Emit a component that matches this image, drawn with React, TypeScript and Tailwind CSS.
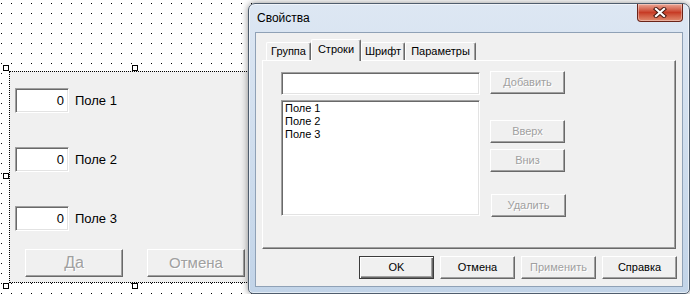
import React from 'react';

// classic 3D bevels
const raised =
  'border border-t-white border-l-white border-r-[#696969] border-b-[#696969] shadow-[inset_-1px_-1px_0_#a0a0a0] bg-[#f0f0f0]';
const sunken =
  'border border-t-[#a0a0a0] border-l-[#a0a0a0] border-r-white border-b-white shadow-[inset_1px_1px_0_#696969,inset_-1px_-1px_0_#e3e3e3] bg-white';
const disabledText = 'text-[#a0a0a0] [text-shadow:1px_1px_0_#fff]';

const Handle: React.FC<{ pos: string }> = ({ pos }) => (
  <div className={`absolute w-[6px] h-[6px] border border-black bg-white ${pos}`} />
);

const FieldRow: React.FC<{ label: string }> = ({ label }) => (
  <div className="flex items-center gap-[6px] h-[25px]">
    <div className={`${sunken} w-[54px] h-[25px] flex items-center justify-end pr-[4px] text-[13px] text-black`}>0</div>
    <span className="text-[13px] text-black">{label}</span>
  </div>
);

const DialogButton: React.FC<{ label: string; disabled?: boolean; isDefault?: boolean }> = ({
  label,
  disabled,
  isDefault,
}) => (
  <button
    className={`w-[75px] h-[23px] flex items-center justify-center text-[11px] ${
      isDefault
        ? 'border border-[#3c3c3c] bg-[#f0f0f0] shadow-[inset_1px_1px_0_#fff,inset_-1px_-1px_0_#696969,inset_-2px_-2px_0_#a0a0a0]'
        : raised
    } ${disabled ? disabledText : 'text-black'}`}
  >
    {label}
  </button>
);

const tabs = [
  { label: 'Группа', w: 'w-[45px]' },
  { label: 'Строки', w: 'w-[50px]', active: true },
  { label: 'Шрифт', w: 'w-[44px]' },
  { label: 'Параметры', w: 'w-[71px]' },
];

export default function App() {
  return (
    <div className="relative w-[690px] h-[294px] overflow-hidden bg-white bg-[image:radial-gradient(circle_at_1.5px_3.5px,#000_0.6px,transparent_0.6px)] bg-size-[10px_10px] font-['Liberation_Sans',Arial,sans-serif]">
      {/* form being designed */}
      <div className="absolute left-[9px] top-[71px] w-[256px] h-[212px] border border-dotted border-black bg-[#f0f0f0] pl-[5px] pt-[16px] flex flex-col">
        <div className="flex flex-col gap-[34px]">
          <FieldRow label="Поле 1" />
          <FieldRow label="Поле 2" />
          <FieldRow label="Поле 3" />
        </div>
        <div className="flex gap-[24px] mt-[18px] pl-[10px]">
          <button className={`${raised} w-[98px] h-[28px] text-[16px] ${disabledText}`}>Да</button>
          <button className={`${raised} w-[98px] h-[28px] text-[15px] ${disabledText}`}>Отмена</button>
        </div>
      </div>

      {/* selection handles */}
      <Handle pos="left-[3px] top-[65px]" />
      <Handle pos="left-[132px] top-[65px]" />
      <Handle pos="left-[3px] top-[173px]" />
      <Handle pos="left-[3px] top-[283px]" />
      <Handle pos="left-[132px] top-[283px]" />

      {/* properties dialog */}
      <div className="absolute left-[248px] top-[3px] w-[442px] h-[291px] rounded-t-[7px] rounded-b-[5px] border border-[#4f5d6d] bg-linear-to-b from-[#dde7f3] to-[#c2d4e8] shadow-[0_0_7px_rgba(0,0,0,0.45),inset_0_0_0_1px_rgba(255,255,255,0.55)] flex flex-col px-[6px] pb-[6px]">
        <div className="h-[28px] flex justify-between">
          <span className="self-center pl-[2px] text-[12px] text-black">Свойства</span>
          <div className="self-start w-[46px] h-[18px] rounded-b-[4px] border border-[#6a2419] border-t-0 bg-linear-to-b from-[#eaa696] via-[#c73b25] to-[#e08a6e] flex items-center justify-center shadow-[inset_0_0_0_1px_rgba(255,255,255,0.35)]">
            <svg width="14" height="11" viewBox="0 0 14 11">
              <path d="M3 2 L11 9 M11 2 L3 9" stroke="#4a1a12" strokeWidth="4.2" strokeLinecap="square" fill="none" />
              <path d="M3 2 L11 9 M11 2 L3 9" stroke="#ffffff" strokeWidth="2.2" strokeLinecap="square" fill="none" />
            </svg>
          </div>
        </div>

        <div className="flex-1 border border-[#8fa1b6] bg-[#f0f0f0] flex flex-col pt-[6px] px-[6px]">
          {/* tab strip */}
          <div className="h-[21px] flex items-end pl-[4px]">
            {tabs.map((t) =>
              t.active ? (
                <div
                  key={t.label}
                  className={`${t.w} relative z-10 h-[22px] mb-[-1px] pb-[2px] rounded-t-[2px] border-t border-l border-r border-t-white border-l-white border-r-[#696969] shadow-[inset_-1px_0_0_#a0a0a0] bg-[#f0f0f0] flex items-center justify-center text-[11px] text-black`}
                >
                  {t.label}
                </div>
              ) : (
                <div
                  key={t.label}
                  className={`${t.w} h-[18px] rounded-t-[2px] border-t border-l border-r border-t-white border-l-white border-r-[#696969] shadow-[inset_-1px_0_0_#a0a0a0] bg-[#f0f0f0] flex items-center justify-center text-[11px] text-black`}
                >
                  {t.label}
                </div>
              )
            )}
          </div>

          {/* tab page */}
          <div className={`${raised} h-[189px] flex gap-[10px] pl-[18px] pt-[10px]`}>
            <div className="flex flex-col mt-[1px]">
              <div className={`${sunken} w-[199px] h-[23px]`} />
              <div className={`${sunken} w-[199px] h-[116px] mt-[5px] pl-[3px] pt-[1px] flex flex-col text-[11px] leading-[13px] text-black`}>
                <span>Поле 1</span>
                <span>Поле 2</span>
                <span>Поле 3</span>
              </div>
            </div>
            <div className="flex flex-col">
              <DialogButton label="Добавить" disabled />
              <div className="mt-[26px]">
                <DialogButton label="Вверх" disabled />
              </div>
              <div className="mt-[6px]">
                <DialogButton label="Вниз" disabled />
              </div>
              <div className="mt-[22px] ml-[1px]">
                <DialogButton label="Удалить" disabled />
              </div>
            </div>
          </div>

          {/* dialog buttons */}
          <div className="flex justify-end gap-[6px] mt-[7px] mr-[-1px]">
            <DialogButton label="OK" isDefault />
            <DialogButton label="Отмена" />
            <DialogButton label="Применить" disabled />
            <DialogButton label="Справка" />
          </div>
        </div>
      </div>
    </div>
  );
}
